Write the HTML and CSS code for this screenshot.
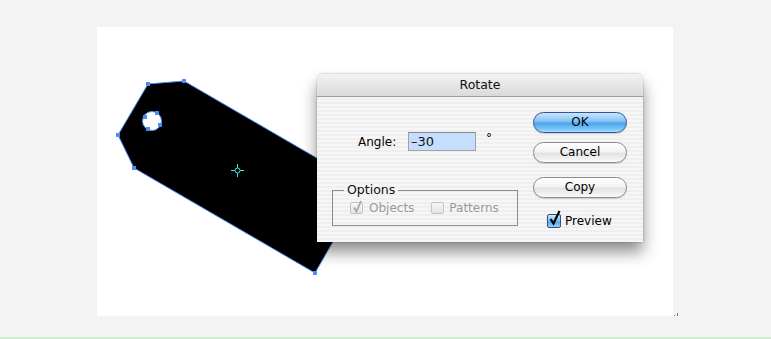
FILE: index.html
```html
<!DOCTYPE html>
<html>
<head>
<meta charset="utf-8">
<link rel="stylesheet" href="styles.css">
</head>
<body>
<div class="stage">
  <div class="canvas">
    <svg class="art" width="576" height="289" viewBox="0 0 576 289">
      <path d="M51 57 L87 54 L268 159 L218 246 L37 141 L21 108 Z" fill="#000" stroke="#4f8df2" stroke-width="1"/>
      <circle cx="55" cy="94" r="9.5" fill="#fff" stroke="#4f8df2" stroke-width="1"/>
      <g fill="#4f8df2">
        <rect x="49" y="55" width="4" height="4"/>
        <rect x="85" y="52" width="4" height="4"/>
        <rect x="19" y="106" width="4" height="4"/>
        <rect x="35" y="139" width="4" height="4"/>
        <rect x="216" y="244" width="4" height="4"/>
        <rect x="58" y="84" width="4" height="4"/>
        <rect x="46" y="88" width="4" height="4"/>
        <rect x="49" y="100" width="4" height="4"/>
        <rect x="61" y="96" width="4" height="4"/>
      </g>
      <g stroke="#3fe6e6" stroke-width="1" fill="none">
        <path d="M140.5 137 V150 M134 143.5 H147"/>
        <circle cx="140.5" cy="143.5" r="2.5" fill="#000"/>
      </g>
    </svg>

    <div class="dialog">
      <div class="titlebar">Rotate</div>
      <div class="dbody">
        <div class="leftcol">
          <div class="anglerow">
            <span class="label">Angle:</span>
            <span class="input">–30</span>
            <span class="deg">°</span>
          </div>
          <fieldset class="options">
            <legend>Options</legend>
            <div class="checkrow">
              <span class="cb cb-dis">
                <svg width="13" height="14" viewBox="0 0 13 14"><path d="M3 7.5 L5.5 11.5 L10 1" stroke="#a8a8a8" stroke-width="1.8" fill="none"/></svg>
              </span>
              <span class="cbtext dis">Objects</span>
              <span class="cb cb-dis cb-gap"></span>
              <span class="cbtext dis">Patterns</span>
            </div>
          </fieldset>
        </div>
        <div class="rightcol">
          <div class="btn btn-default">OK</div>
          <div class="btn btn-cancel">Cancel</div>
          <div class="btn btn-copy">Copy</div>
          <div class="preview">
            <span class="cb cb-on">
              <svg width="16" height="17" viewBox="0 0 16 17"><path d="M3.5 9 L6.5 13.5 L12.5 1" stroke="#000" stroke-width="2.2" fill="none"/></svg>
            </span>
            <span class="cbtext">Preview</span>
          </div>
        </div>
      </div>
    </div>
  </div>
  <span class="mark"></span>
</div>
<div class="greenline"></div>
</body>
</html>
```

FILE: styles.css
```css
html, body {
  margin: 0;
  padding: 0;
}
body {
  background: #f3f3f3;
  height: 339px;
  overflow: hidden;
  font-family: "DejaVu Sans", "Liberation Sans", sans-serif;
  font-size: 12px;
  color: #000;
}
.stage {
  position: relative;
  padding: 27px 0 0 97px;
  height: 289px;
}
.canvas {
  position: relative;
  width: 576px;
  height: 289px;
  background: #fff;
}
.art {
  position: absolute;
  left: 0;
  top: 0;
}
.mark {
  position: absolute;
  left: 674px;
  top: 313px;
  width: 4px;
  height: 3px;
  background:
    linear-gradient(#777, #777) 0 2px / 1px 1px no-repeat,
    linear-gradient(#777, #777) 3px 0 / 1px 3px no-repeat;
}
.greenline {
  margin-top: 21px;
  height: 2px;
  background: #d5ebd5;
}

/* dialog */
.dialog {
  position: absolute;
  left: 220px;
  top: 47px;
  width: 326px;
  height: 168px;
  border-radius: 6px 6px 0 0;
  box-shadow: 0 10px 16px rgba(0, 0, 0, 0.45), 0 0 2px rgba(0, 0, 0, 0.35);
  overflow: hidden;
  background: repeating-linear-gradient(#efefef 0, #efefef 2px, #f6f6f6 2px, #f6f6f6 4px);
}
.titlebar {
  height: 22px;
  line-height: 22px;
  text-align: center;
  border-bottom: 1px solid #9c9c9c;
  background: linear-gradient(#f3f3f3, #e6e6e6 50%, #dadada);
  color: #111;
  font-size: 12.5px;
}
.dbody {
  display: flex;
  height: 145px;
}
.leftcol {
  width: 201px;
  padding-left: 15px;
}
.anglerow {
  display: flex;
  align-items: center;
  height: 19px;
  margin-top: 35px;
}
.label {
  margin-left: 26px;
  width: 50px;
}
.input {
  box-sizing: border-box;
  width: 68px;
  height: 19px;
  line-height: 17px;
  padding-left: 2px;
  background: #c5defd;
  border: 1px solid #a2a2a2;
  border-top-color: #8a8a8a;
  font-size: 13px;
  color: #111;
}
.deg {
  margin-left: 10px;
  align-self: flex-start;
  line-height: 12px;
  font-size: 12px;
}
.options {
  box-sizing: border-box;
  margin: 32px 0 0 0;
  padding: 0;
  width: 186px;
  height: 43px;
  border: 1px solid #8c8c8c;
}
.options legend {
  margin-left: 11px;
  padding: 0 3px;
  line-height: 14px;
  color: #111;
  font-size: 12.5px;
}
.checkrow {
  display: flex;
  align-items: center;
  height: 14px;
  padding: 4px 0 0 17px;
}
.cb {
  box-sizing: border-box;
  position: relative;
  width: 13px;
  height: 12px;
  border: 1px solid #c4c4c4;
  border-radius: 2px;
  background: linear-gradient(#f6f6f6, #e4e4e4);
}
.cb svg {
  position: absolute;
  left: 0;
  top: -3px;
}
.cb-gap {
  margin-left: 17px;
}
.cbtext {
  margin-left: 6px;
}
.cbtext.dis {
  color: #9a9a9a;
}
.cb-gap + .cbtext {
  margin-left: 5px;
}
.rightcol {
  display: flex;
  flex-direction: column;
  padding-top: 15px;
}
.btn {
  box-sizing: border-box;
  width: 94px;
  height: 21px;
  line-height: 19px;
  text-align: center;
  border-radius: 11px;
  border: 1px solid #8b8b8b;
  background: linear-gradient(#ffffff 0%, #f4f4f4 45%, #e3e3e3 55%, #f2f2f2 85%, #fbfbfb 100%);
  box-shadow: 0 1px 1px rgba(0, 0, 0, 0.15);
}
.btn-default {
  border-color: #32549c;
  background: linear-gradient(#c9e4fc 0%, #8cc6f6 40%, #4fa6ec 55%, #6dc0f6 80%, #a6defc 100%);
}
.btn-cancel {
  margin-top: 9px;
}
.btn-copy {
  margin-top: 14px;
}
.preview {
  display: flex;
  align-items: center;
  margin-top: 16px;
  padding-left: 14px;
  height: 14px;
}
.cb-on {
  width: 14px;
  height: 14px;
  border: 1px solid #2e4f8c;
  background: linear-gradient(#cfe7fb, #7dbcef 50%, #5aa9ea 60%, #9ad2f8);
}
.cb-on svg {
  left: -1px;
  top: -5px;
}
.cb-on + .cbtext {
  margin-left: 4px;
}
```
